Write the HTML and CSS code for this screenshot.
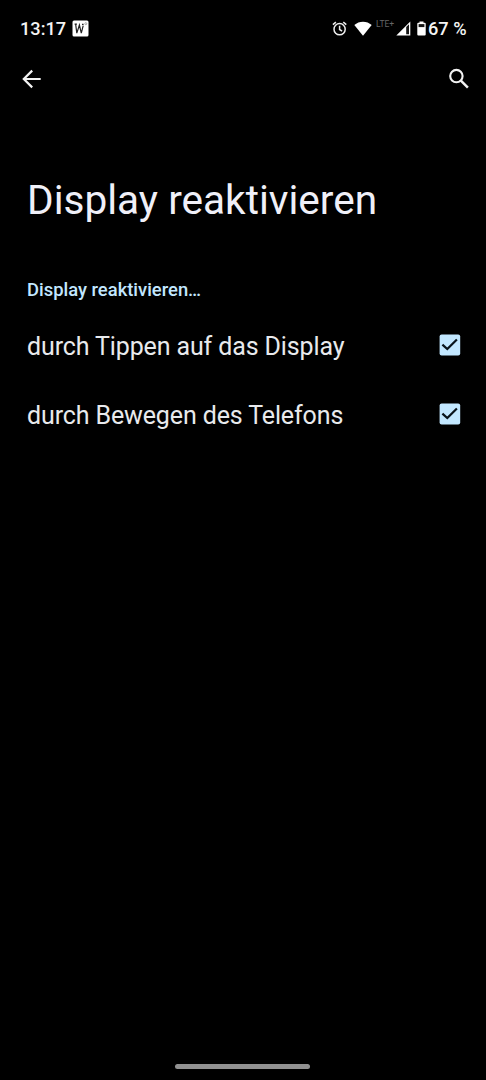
FILE: index.html
```html
<!DOCTYPE html>
<html lang="de">
<head>
<meta charset="utf-8">
<title>Display reaktivieren</title>
<link rel="stylesheet" href="styles.css">
</head>
<body>
<div class="screen">
  <header class="status">
    <span class="clock">13:17</span>
    <svg class="app-icon" width="17" height="17" viewBox="0 0 17 17"><rect x=".5" y=".5" width="16" height="16" rx="1.5" fill="#fff"/><path d="M2.6 4.2h2.3M3.7 4.5l1.1 8.6L7.4 5l1.9 8.1 1.9-7.5M10 4.4h1.6" fill="none" stroke="#222" stroke-width="1.2"/><circle cx="13.8" cy="3.7" r="1" fill="none" stroke="#777" stroke-width=".6"/></svg>
    <div class="indicators">
      <svg class="alarm" width="16" height="16" viewBox="0 0 16 16" fill="none" stroke="#eee" stroke-width="1.5"><circle cx="7.6" cy="8.2" r="5.6"/><path d="M7.6 4.8v3.7l2.5 1.6M.9 3.7l3-2.5M14.3 3.7l-3-2.5"/></svg>
      <svg class="wifi" width="18" height="15" viewBox="0 0 18 15"><path d="M.3 4C5-.5 13-.5 17.7 4L9 14.7z" fill="#fff"/></svg>
      <span class="network">LTE+</span>
      <svg class="signal" width="15" height="15" viewBox="0 0 15 15"><path d="M.3 14.5L14.3.5v14z" fill="#fff"/><path d="M10.2 6L13 3.3v9.9h-2.8z" fill="#161616"/></svg>
      <svg class="battery" width="9" height="15" viewBox="0 0 9 15"><path d="M2.5.5h4v1.3h1.2q1 0 1 1v10.7q0 1-1 1H1.3q-1 0-1-1V2.8q0-1 1-1h1.2z" fill="#fff"/><path d="M1.6 3.1h5.8v3H1.6z" fill="#151515"/></svg>
      <span class="percent">67 %</span>
    </div>
  </header>
  <nav class="toolbar">
    <svg width="20" height="20" viewBox="0 0 20 20" fill="none" stroke="#f2f2f2" stroke-width="2.2"><path d="M18.7 10H2.5M10.2 1.6L1.8 10l8.4 8.4"/></svg>
    <svg width="22" height="22" viewBox="0 0 22 22" fill="none" stroke="#f2f2f2"><circle cx="8.4" cy="8.1" r="6.2" stroke-width="2.1"/><path d="M12.9 12.6l7 7" stroke-width="2.5"/></svg>
  </nav>
  <main>
    <h1>Display reaktivieren</h1>
    <h2>Display reaktivieren…</h2>
    <div class="option"><span>durch Tippen auf das Display</span>
      <svg class="checkbox" width="22" height="22" viewBox="0 0 22 22"><rect x=".6" y=".6" width="20.6" height="20.8" rx="2" fill="#c2e7ff"/><path d="M3.4 10.6l4.9 4.5 9.6-9.6" fill="none" stroke="#08131b" stroke-width="2.2"/></svg></div>
    <div class="option"><span>durch Bewegen des Telefons</span>
      <svg class="checkbox" width="22" height="22" viewBox="0 0 22 22"><rect x=".6" y=".6" width="20.6" height="20.8" rx="2" fill="#c2e7ff"/><path d="M3.4 10.6l4.9 4.5 9.6-9.6" fill="none" stroke="#08131b" stroke-width="2.2"/></svg></div>
  </main>
  <footer class="gesture"><div class="handle"></div></footer>
</div>
</body>
</html>
```
FILE: styles.css
```css
* { box-sizing: border-box; }
body { margin: 0; background: #000; font-family: Roboto, sans-serif; color: #e8eaed; }
svg { display: block; flex: none; }
.screen { width: 486px; height: 1080px; display: flex; flex-direction: column; overflow: hidden; }
.status { height: 57px; padding: 0 19px 0 20px; display: flex; align-items: center; color: #f4f4f4; font-size: 18.2px; font-weight: 500; white-space: nowrap; }
.clock { width: 52px; }
.indicators { margin-left: auto; display: flex; align-items: center; }
.wifi { margin-left: 6px; }
.network { margin: -10px 0 0 4px; width: 18px; font-size: 8.5px; font-weight: 400; color: #666; }
.signal { margin-left: 2px; }
.battery { margin-left: 6px; }
.percent { margin-left: 2px; width: 39px; }
.toolbar { height: 44px; padding: 0 16px 0 22px; display: flex; align-items: center; justify-content: space-between; }
main { padding: 74px 25px 0 27px; }
h1 { margin: 0; font-size: 40.6px; line-height: 50px; font-weight: 400; color: #f0f0f8; white-space: nowrap; }
h2 { margin: 53px 0 0; font-size: 18.4px; line-height: 24px; font-weight: 500; color: #c2e7ff; }
.option { height: 69px; display: flex; align-items: center; justify-content: space-between; font-size: 25px; letter-spacing: -.12px; white-space: nowrap; }
h2 + .option { margin-top: 10px; }
.checkbox { margin-bottom: 3px; }
.gesture { margin-top: auto; height: 16px; padding-right: 1px; display: flex; justify-content: center; }
.handle { width: 135px; height: 5px; border-radius: 3px; background: #919191; }
```
